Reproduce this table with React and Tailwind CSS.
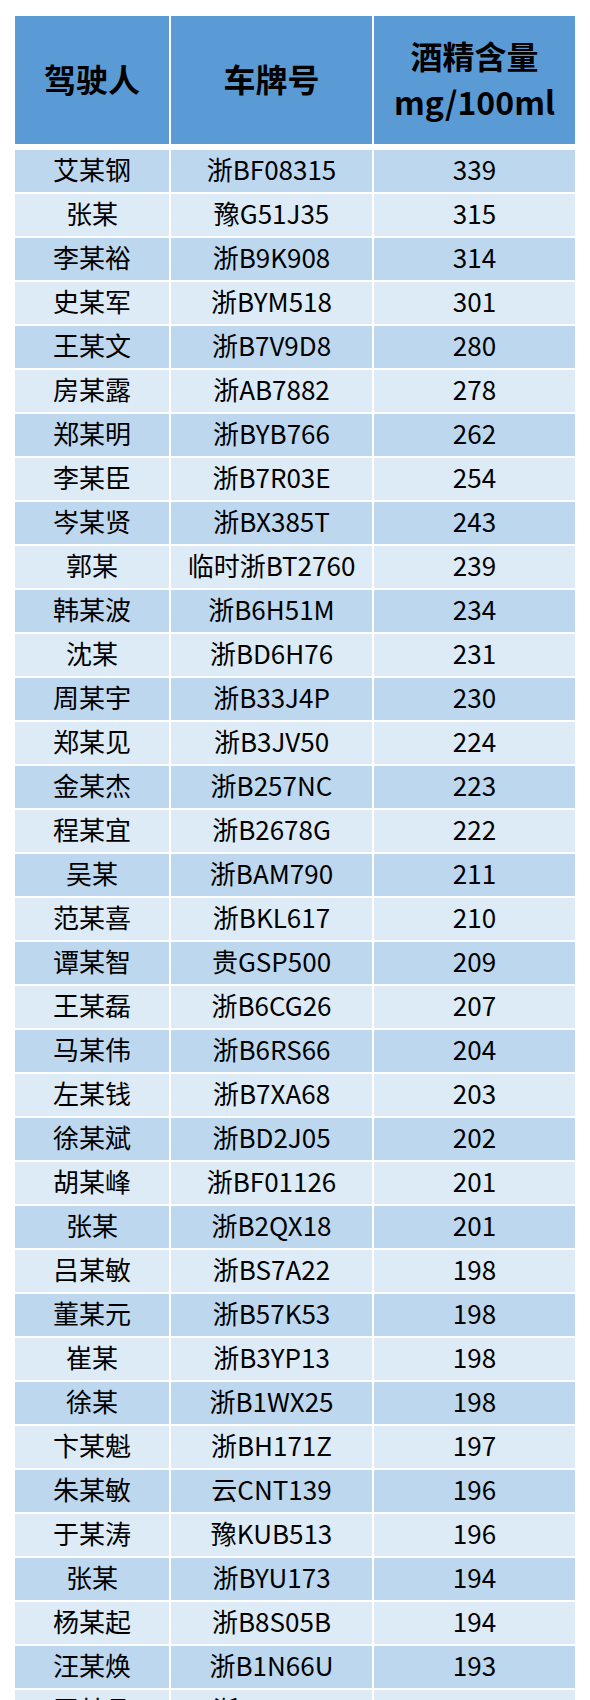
import React from "react";

const rows = [
  ["艾某钢", "浙BF08315", "339"],
  ["张某", "豫G51J35", "315"],
  ["李某裕", "浙B9K908", "314"],
  ["史某军", "浙BYM518", "301"],
  ["王某文", "浙B7V9D8", "280"],
  ["房某露", "浙AB7882", "278"],
  ["郑某明", "浙BYB766", "262"],
  ["李某臣", "浙B7R03E", "254"],
  ["岑某贤", "浙BX385T", "243"],
  ["郭某", "临时浙BT2760", "239"],
  ["韩某波", "浙B6H51M", "234"],
  ["沈某", "浙BD6H76", "231"],
  ["周某宇", "浙B33J4P", "230"],
  ["郑某见", "浙B3JV50", "224"],
  ["金某杰", "浙B257NC", "223"],
  ["程某宜", "浙B2678G", "222"],
  ["吴某", "浙BAM790", "211"],
  ["范某喜", "浙BKL617", "210"],
  ["谭某智", "贵GSP500", "209"],
  ["王某磊", "浙B6CG26", "207"],
  ["马某伟", "浙B6RS66", "204"],
  ["左某钱", "浙B7XA68", "203"],
  ["徐某斌", "浙BD2J05", "202"],
  ["胡某峰", "浙BF01126", "201"],
  ["张某", "浙B2QX18", "201"],
  ["吕某敏", "浙BS7A22", "198"],
  ["董某元", "浙B57K53", "198"],
  ["崔某", "浙B3YP13", "198"],
  ["徐某", "浙B1WX25", "198"],
  ["卞某魁", "浙BH171Z", "197"],
  ["朱某敏", "云CNT139", "196"],
  ["于某涛", "豫KUB513", "196"],
  ["张某", "浙BYU173", "194"],
  ["杨某起", "浙B8S05B", "194"],
  ["汪某焕", "浙B1N66U", "193"],
  ["王某品", "浙B2K176", "192"],
];

const font = { fontFamily: '"Noto Sans CJK SC", "Noto Sans", sans-serif' };

export default function App() {
  return (
    <div className="bg-white w-[590px] h-[1700px] overflow-hidden pt-[16px] pl-[15px]" style={font}>
      <div className="grid grid-cols-[154px_201px_201px] gap-x-[2px] h-[128px]">
        <div className="bg-[#5b9bd5] flex items-center justify-center text-[32px] font-bold text-black pb-[4px]">驾驶人</div>
        <div className="bg-[#5b9bd5] flex items-center justify-center text-[32px] font-bold text-black pb-[4px]">车牌号</div>
        <div className="bg-[#5b9bd5] flex flex-col items-center justify-center text-[32px] font-bold text-black leading-[46px] pb-[4px]">
          <span>酒精含量</span>
          <span>mg/100ml</span>
        </div>
      </div>
      <div className="mt-[6px] flex flex-col gap-y-[2px]">
        {rows.map((r, i) => {
          const bg = i % 2 === 0 ? "bg-[#bdd7ee]" : "bg-[#ddebf7]";
          return (
            <div key={i} className="grid grid-cols-[154px_201px_201px] gap-x-[2px] h-[42px] shrink-0">
              <div className={`${bg} flex items-center justify-center text-[26px] text-black leading-none pb-[4px]`}>{r[0]}</div>
              <div className={`${bg} flex items-center justify-center text-[26px] text-black leading-none pb-[4px]`}>{r[1]}</div>
              <div className={`${bg} flex items-center justify-center text-[26px] text-black leading-none pb-[4px]`}>{r[2]}</div>
            </div>
          );
        })}
      </div>
    </div>
  );
}
